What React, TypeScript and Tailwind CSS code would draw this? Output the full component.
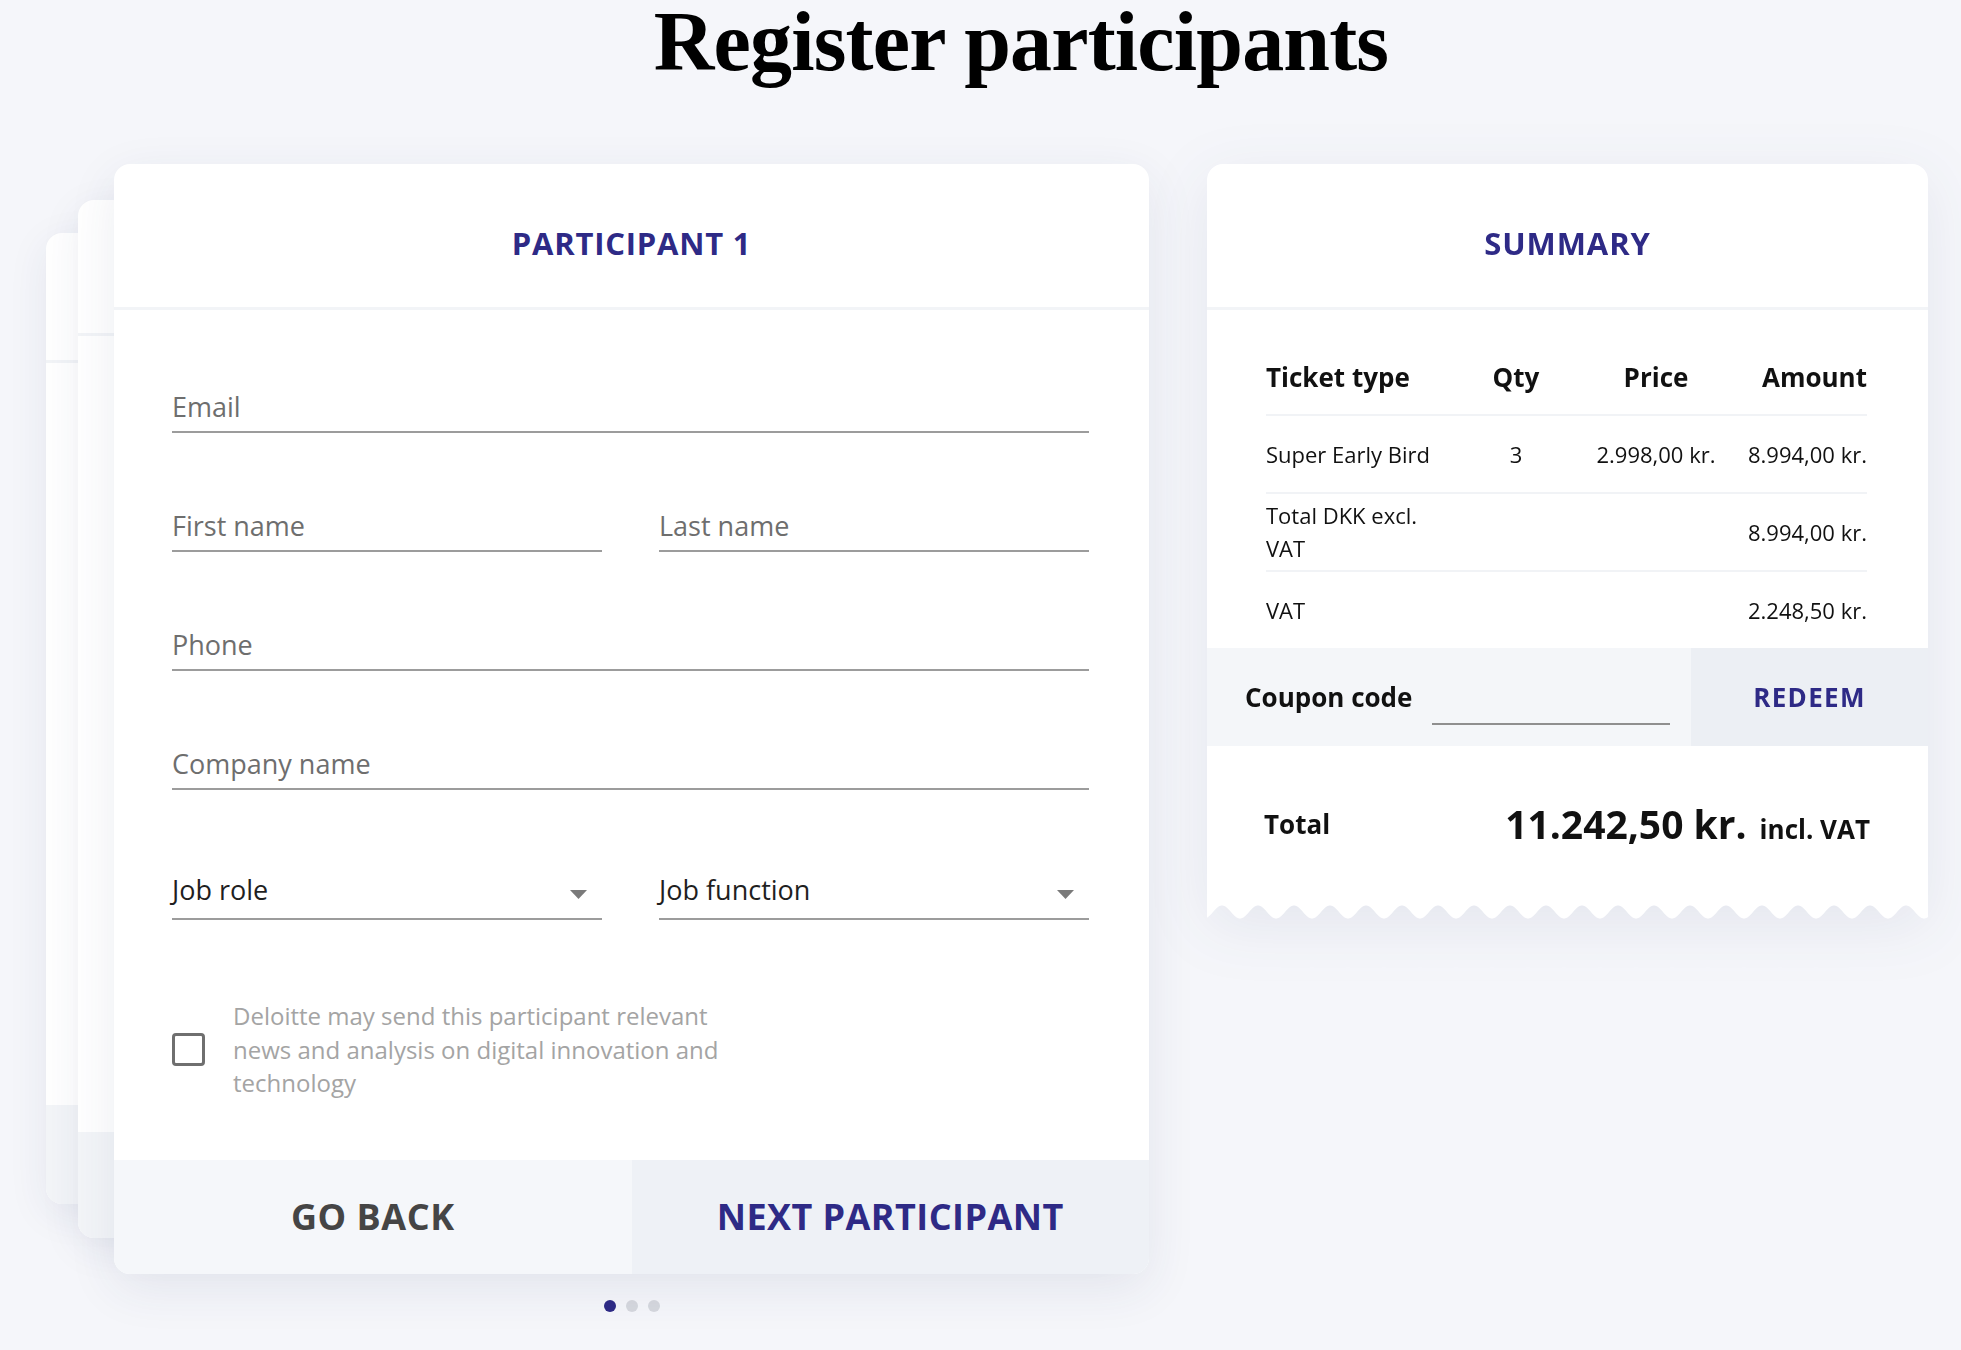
import React from "react";

function Field({ label }: { label: string }) {
  return (
    <div className="border-b-2 border-[#9c9c9c] pb-[6px]">
      <span className="block text-[27px] leading-[36px] text-[#6e6e6e]">{label}</span>
    </div>
  );
}

function SelectField({ label }: { label: string }) {
  return (
    <div className="relative border-b-2 border-[#9c9c9c] pb-[10px]">
      <span className="block text-[27px] leading-[36px] text-[#1f1f1f]">{label}</span>
      <svg className="absolute right-[15px] top-[18px]" width="17" height="9" viewBox="0 0 17 9">
        <path d="M0 0H17L8.5 9Z" fill="#7a7a7a" />
      </svg>
    </div>
  );
}

function BackCard({ headerH, footerH, cls }: { headerH: string; footerH: string; cls: string }) {
  return (
    <div className={`absolute ${cls} flex flex-col overflow-hidden rounded-[16px] bg-white shadow-[0_10px_40px_rgba(40,50,100,0.08)]`}>
      <div className={`${headerH} border-b-[3px] border-[#f2f4f7]`} />
      <div className="flex-1" />
      <div className={`${footerH} bg-[#f3f5f8]`} />
    </div>
  );
}

function Scallop({ width }: { width: number }) {
  const period = 36;
  const amp = 6.5;
  const base = 10;
  let d = `M0 0 L0 ${base + amp * Math.cos((2 * Math.PI * (0 - 33)) / period)}`;
  for (let x = 1; x <= width; x += 1) {
    const y = base + amp * Math.cos((2 * Math.PI * (x - 33)) / period);
    d += ` L${x} ${y.toFixed(2)}`;
  }
  d += ` L${width} 0 Z`;
  return (
    <svg width={width} height={18} viewBox={`0 0 ${width} 18`} className="block">
      <path d={d} fill="#ffffff" />
    </svg>
  );
}

export default function App() {
  return (
    <div className="min-h-[1350px] w-full overflow-hidden bg-[#f5f6fa] font-['Open_Sans',sans-serif]">
      <div className="ml-[114px] w-[1814px]">
        <h1 className="text-center font-['Liberation_Serif',serif] text-[84px] font-bold leading-none tracking-[-0.01em] text-black">
          Register participants
        </h1>

        <div className="mt-[80px] flex items-start gap-[58px]">
          {/* Left column */}
          <div className="flex w-[1035px] flex-col items-center">
            <div className="relative w-[1035px]">
              <BackCard cls="left-[-68px] right-[68px] top-[69px] bottom-[70px]" headerH="h-[130px]" footerH="h-[99px]" />
              <BackCard cls="left-[-36px] right-[36px] top-[36px] bottom-[36px]" headerH="h-[136px]" footerH="h-[106px]" />

              <div className="relative overflow-hidden rounded-[16px] bg-white shadow-[0_14px_50px_rgba(40,50,100,0.09)]">
                <div className="flex h-[146px] items-center justify-center border-b-[3px] border-[#f2f4f7] pt-[16px]">
                  <span className="text-[31px] font-bold tracking-[0.025em] text-[#2e2a86]">PARTICIPANT 1</span>
                </div>

                <div className="pl-[58px] pr-[60px] pt-[79px] pb-[60px]">
                  <div className="flex flex-col gap-[75px]">
                    <Field label="Email" />
                    <div className="grid grid-cols-2 gap-x-[57px]">
                      <Field label="First name" />
                      <Field label="Last name" />
                    </div>
                    <Field label="Phone" />
                    <Field label="Company name" />
                  </div>
                  <div className="mt-[82px] grid grid-cols-2 gap-x-[57px]">
                    <SelectField label="Job role" />
                    <SelectField label="Job function" />
                  </div>
                  <div className="mt-[79px] flex items-center">
                    <div className="h-[33px] w-[33px] shrink-0 rounded-[4px] border-[3px] border-[#6f6f6f]" />
                    <p className="ml-[28px] w-[500px] text-[24px] leading-[33.5px] text-[#a4a4a4]">
                      Deloitte may send this participant relevant news and analysis on digital innovation and technology
                    </p>
                  </div>
                </div>

                <div className="flex h-[114px]">
                  <button className="flex flex-1 items-center justify-center bg-[#f5f7fa] text-[36px] font-bold tracking-[0.015em] text-[#454545]">
                    GO BACK
                  </button>
                  <button className="flex flex-1 items-center justify-center bg-[#eef1f6] text-[36px] font-bold tracking-[0.012em] text-[#2e2a86]">
                    NEXT PARTICIPANT
                  </button>
                </div>
              </div>
            </div>

            <div className="mt-[26px] flex gap-[10px]">
              <span className="h-[12px] w-[12px] rounded-full bg-[#2e2a86]" />
              <span className="h-[12px] w-[12px] rounded-full bg-[#d6d8de]" />
              <span className="h-[12px] w-[12px] rounded-full bg-[#d6d8de]" />
            </div>
          </div>

          {/* Summary */}
          <div className="w-[721px] drop-shadow-[0_14px_30px_rgba(40,50,100,0.08)]">
            <div className="overflow-hidden rounded-t-[16px] bg-white">
              <div className="flex h-[146px] items-center justify-center border-b-[3px] border-[#f2f4f7] pt-[16px]">
                <span className="text-[31px] font-bold tracking-[0.03em] text-[#2e2a86]">SUMMARY</span>
              </div>

              <div className="pl-[59px] pr-[61px] text-[#111]">
                <div className="grid grid-cols-[180px_140px_140px_1fr] items-center border-b-2 border-[#f1f3f6] pt-[50px] pb-[20px] text-[26px] font-bold leading-[34px]">
                  <span>Ticket type</span>
                  <span className="text-center">Qty</span>
                  <span className="text-center">Price</span>
                  <span className="text-right">Amount</span>
                </div>
                <div className="grid h-[78px] grid-cols-[180px_140px_140px_1fr] items-center border-b-2 border-[#f1f3f6] text-[22px] leading-[33px]">
                  <span className="whitespace-nowrap">Super Early Bird</span>
                  <span className="text-center">3</span>
                  <span className="whitespace-nowrap text-center">2.998,00 kr.</span>
                  <span className="whitespace-nowrap text-right">8.994,00 kr.</span>
                </div>
                <div className="grid h-[78px] grid-cols-[180px_140px_140px_1fr] items-center border-b-2 border-[#f1f3f6] text-[22px] leading-[33px]">
                  <span className="w-[172px]">Total DKK excl. VAT</span>
                  <span />
                  <span />
                  <span className="whitespace-nowrap text-right">8.994,00 kr.</span>
                </div>
                <div className="grid h-[76px] grid-cols-[180px_140px_140px_1fr] items-center text-[22px] leading-[33px]">
                  <span>VAT</span>
                  <span />
                  <span />
                  <span className="whitespace-nowrap text-right">2.248,50 kr.</span>
                </div>
              </div>

              <div className="flex h-[98px]">
                <div className="flex flex-1 items-center bg-[#f4f6f9] pl-[38px]">
                  <span className="text-[26px] font-bold text-[#111]">Coupon code</span>
                  <div className="ml-[20px] h-[56px] w-[238px] border-b-2 border-[#8f8f8f]" />
                </div>
                <div className="flex w-[237px] items-center justify-center bg-[#eceff4]">
                  <span className="text-[26px] font-bold tracking-[0.05em] text-[#2e2a86]">REDEEM</span>
                </div>
              </div>

              <div className="flex h-[156px] items-center justify-between pl-[57px] pr-[58px] text-[#111]">
                <span className="text-[26px] font-bold">Total</span>
                <div className="flex items-baseline gap-[13px]">
                  <span className="text-[39px] font-bold">11.242,50 kr.</span>
                  <span className="text-[26px] font-bold">incl. VAT</span>
                </div>
              </div>
            </div>
            <Scallop width={721} />
          </div>
        </div>
      </div>
    </div>
  );
}
